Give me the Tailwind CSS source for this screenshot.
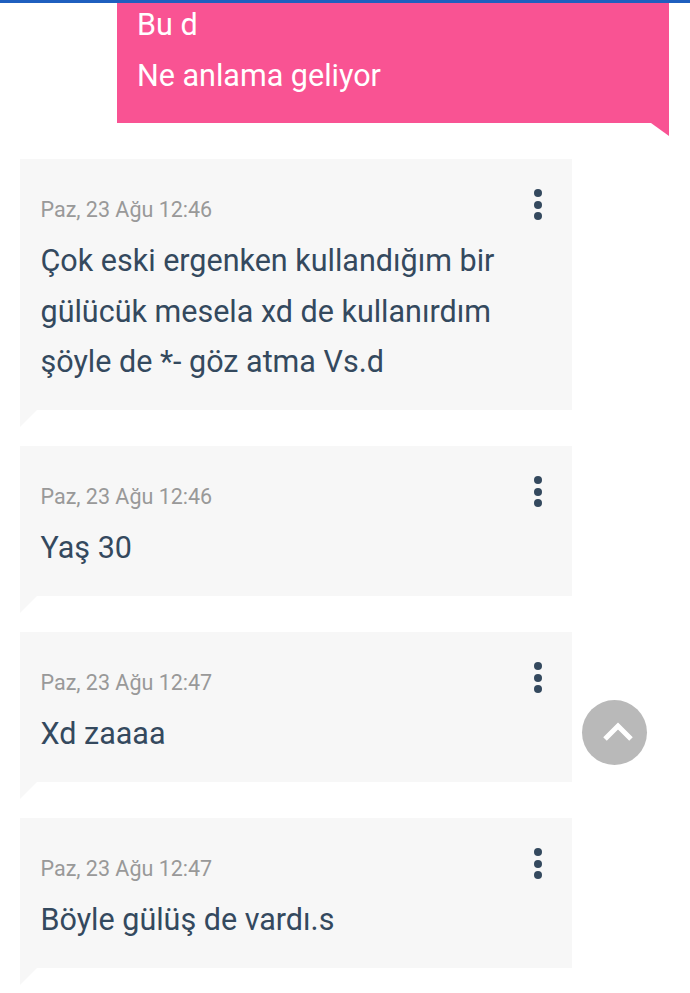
<!DOCTYPE html>
<html lang="tr">
<head>
  <meta charset="UTF-8">
  <title>Mesajlar</title>
  <meta name="viewport" content="width=device-width, initial-scale=1.0">
  <script src="https://cdn.jsdelivr.net/npm/@tailwindcss/browser@4"></script>
</head>
<body class="bg-white h-[993px] w-[690px] overflow-hidden relative font-['Roboto',sans-serif]">

  <div class="h-[3px] bg-[#1f5fbf]"></div>

  <!-- sent message -->
  <div class="relative flow-root ml-[117px] w-[552px] h-[120px] bg-[#f95393] px-5 text-white text-[30.5px] leading-[50.5px]">
    <div class="-mt-[3px]">
      <p>Bu d</p>
      <p>Ne anlama geliyor</p>
    </div>
    <div class="absolute right-0 top-full w-[18px] h-[13px] bg-[#f95393] [clip-path:polygon(0_0,100%_0,100%_100%)]"></div>
  </div>

  <!-- received messages -->
  <div class="mt-[36px] ml-5 w-[552px] flex flex-col gap-[36px]">

    <div class="relative bg-[#f7f7f7] pt-[37px] pb-[22.5px] px-[20.5px]">
      <div class="text-[21.5px] leading-[28px] text-[#999999]">Paz, 23 Ağu 12:46</div>
      <p class="mt-3 text-[30.5px] leading-[50.5px] text-[#34495e]">Çok eski ergenken kullandığım bir gülücük mesela xd de kullanırdım şöyle de *- göz atma Vs.d</p>
      <div class="absolute top-[30px] left-[514px] flex flex-col gap-[3.5px]">
        <span class="block size-2 rounded-full bg-[#34495e]"></span>
        <span class="block size-2 rounded-full bg-[#34495e]"></span>
        <span class="block size-2 rounded-full bg-[#34495e]"></span>
      </div>
      <div class="absolute left-0 top-full w-[17px] h-[17px] bg-[#f7f7f7] [clip-path:polygon(0_0,100%_0,0_100%)]"></div>
    </div>

    <div class="relative bg-[#f7f7f7] pt-[37px] pb-[22.5px] px-[20.5px]">
      <div class="text-[21.5px] leading-[28px] text-[#999999]">Paz, 23 Ağu 12:46</div>
      <p class="mt-3 text-[30.5px] leading-[50.5px] text-[#34495e]">Yaş 30</p>
      <div class="absolute top-[30px] left-[514px] flex flex-col gap-[3.5px]">
        <span class="block size-2 rounded-full bg-[#34495e]"></span>
        <span class="block size-2 rounded-full bg-[#34495e]"></span>
        <span class="block size-2 rounded-full bg-[#34495e]"></span>
      </div>
      <div class="absolute left-0 top-full w-[17px] h-[17px] bg-[#f7f7f7] [clip-path:polygon(0_0,100%_0,0_100%)]"></div>
    </div>

    <div class="relative bg-[#f7f7f7] pt-[37px] pb-[22.5px] px-[20.5px]">
      <div class="text-[21.5px] leading-[28px] text-[#999999]">Paz, 23 Ağu 12:47</div>
      <p class="mt-3 text-[30.5px] leading-[50.5px] text-[#34495e]">Xd zaaaa</p>
      <div class="absolute top-[30px] left-[514px] flex flex-col gap-[3.5px]">
        <span class="block size-2 rounded-full bg-[#34495e]"></span>
        <span class="block size-2 rounded-full bg-[#34495e]"></span>
        <span class="block size-2 rounded-full bg-[#34495e]"></span>
      </div>
      <div class="absolute left-0 top-full w-[17px] h-[17px] bg-[#f7f7f7] [clip-path:polygon(0_0,100%_0,0_100%)]"></div>
    </div>

    <div class="relative bg-[#f7f7f7] pt-[37px] pb-[22.5px] px-[20.5px]">
      <div class="text-[21.5px] leading-[28px] text-[#999999]">Paz, 23 Ağu 12:47</div>
      <p class="mt-3 text-[30.5px] leading-[50.5px] text-[#34495e]">Böyle gülüş de vardı.s</p>
      <div class="absolute top-[30px] left-[514px] flex flex-col gap-[3.5px]">
        <span class="block size-2 rounded-full bg-[#34495e]"></span>
        <span class="block size-2 rounded-full bg-[#34495e]"></span>
        <span class="block size-2 rounded-full bg-[#34495e]"></span>
      </div>
      <div class="absolute left-0 top-full w-[17px] h-[17px] bg-[#f7f7f7] [clip-path:polygon(0_0,100%_0,0_100%)]"></div>
    </div>

  </div>

  <!-- scroll to top -->
  <div class="absolute left-[582px] top-[700px] size-[65px] rounded-full bg-[#b9b9b9] flex items-center justify-center">
    <svg class="ml-[6px] -mt-[4px]" width="32" height="22" viewBox="0 0 32 22" fill="none" stroke="#ffffff" stroke-width="5">
      <path d="M3 19 L16 6 L29 19"/>
    </svg>
  </div>

</body>
</html>
